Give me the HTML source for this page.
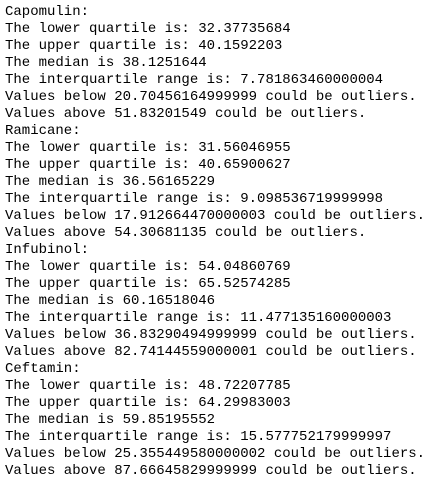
<html><head><style>
body{margin:0;background:#fff;width:443px;height:490px;overflow:hidden}
pre{margin:0;padding:4px 0 0 5px;font-family:"Liberation Mono",monospace;font-size:14px;line-height:17px;color:#000}
</style></head><body><pre>Capomulin:
The lower quartile is: 32.37735684
The upper quartile is: 40.1592203
The median is 38.1251644
The interquartile range is: 7.781863460000004
Values below 20.70456164999999 could be outliers.
Values above 51.83201549 could be outliers.
Ramicane:
The lower quartile is: 31.56046955
The upper quartile is: 40.65900627
The median is 36.56165229
The interquartile range is: 9.098536719999998
Values below 17.912664470000003 could be outliers.
Values above 54.30681135 could be outliers.
Infubinol:
The lower quartile is: 54.04860769
The upper quartile is: 65.52574285
The median is 60.16518046
The interquartile range is: 11.477135160000003
Values below 36.83290494999999 could be outliers.
Values above 82.74144559000001 could be outliers.
Ceftamin:
The lower quartile is: 48.72207785
The upper quartile is: 64.29983003
The median is 59.85195552
The interquartile range is: 15.577752179999997
Values below 25.355449580000002 could be outliers.
Values above 87.66645829999999 could be outliers.</pre></body></html>
